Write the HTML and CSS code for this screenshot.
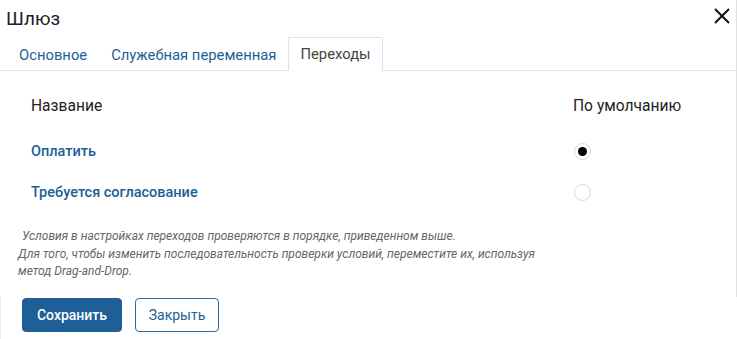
FILE: index.html
```html
<!DOCTYPE html>
<html lang="ru">
<head>
<meta charset="utf-8">
<link rel="stylesheet" href="styles.css">
</head>
<body>
<div class="dialog">
  <div class="main">
    <header class="head">
      <h1 class="title">Шлюз</h1>
      <button class="close" aria-label="Закрыть">
        <svg width="16" height="16" viewBox="0 0 16 16"><path d="M1 1L15 15M15 1L1 15" stroke="#111" stroke-width="2"/></svg>
      </button>
    </header>
    <nav class="tabs">
      <span class="tab">Основное</span>
      <span class="tab">Служебная переменная</span>
      <span class="tab active">Переходы</span>
    </nav>
    <div class="table">
      <div class="row hdr">
        <span class="name">Название</span>
        <span class="def">По умолчанию</span>
      </div>
      <div class="row">
        <span class="name link">Оплатить</span>
        <span class="def"><span class="radio checked"></span></span>
      </div>
      <div class="row">
        <span class="name link">Требуется согласование</span>
        <span class="def"><span class="radio"></span></span>
      </div>
    </div>
    <p class="note"><span class="l1">Условия в настройках переходов проверяются в порядке, приведенном выше.</span><br>Для того, чтобы изменить последовательность проверки условий, переместите их, используя метод Drag-and-Drop.</p>
  </div>
  <footer class="foot">
    <button class="btn primary">Сохранить</button>
    <button class="btn secondary">Закрыть</button>
  </footer>
</div>
</body>
</html>
```

FILE: styles.css
```css
* { box-sizing: border-box; }
html, body { margin: 0; padding: 0; background: #fff; }
body { font-family: Roboto, "Liberation Sans", Arial, sans-serif; color: #222; width: 737px; height: 339px; overflow: hidden; }
.dialog { display: flex; flex-direction: column; height: 339px; }
.main { border-right: 1px solid #e2e2e2; height: 297px; }
.head { display: flex; justify-content: space-between; align-items: center; padding: 4px 7px 0 6px; height: 34px; }
.title { margin: 0; font-size: 19px; font-weight: 400; color: #222; line-height: 24px; }
.close { border: 0; background: none; padding: 0; width: 16px; height: 16px; display: block; margin: -6px -1px 0 0; }
.close svg { display: block; }
.tabs { display: flex; align-items: flex-end; border-bottom: 1px solid #dde2ea; height: 37px; padding-left: 7px; }
.tab { font-size: 14.8px; color: #1d5f96; padding: 0 11px; height: 33px; line-height: 33px; border: 1px solid transparent; border-bottom: 0; margin-bottom: -1px; }
.tab.active { color: #444; background: #fff; border-color: #dde2ea; border-bottom: 1px solid #fff; height: 34px; }
.table { padding: 23px 0 0 31px; }
.row { display: flex; align-items: center; height: 41px; font-size: 14.5px; }
.row.hdr { height: 24px; margin-bottom: 13px; font-size: 15.6px; }
.name { flex: 1; }
.def { width: 163px; }
.link { color: #1d5f96; font-weight: 500; }
.radio { display: block; width: 17px; height: 17px; border: 1px solid #d8d8d8; border-radius: 50%; position: relative; margin-left: 1px; }
.radio.checked::after { content: ""; position: absolute; left: 3px; top: 3px; width: 9px; height: 9px; border-radius: 50%; background: #000; }
.note { margin: 15px 0 0 18px; font-size: 12px; font-style: italic; color: #666; line-height: 17.5px; width: 550px; }
.note .l1 { padding-left: 4px; }
.foot { display: flex; gap: 13px; padding: 1px 0 0 21px; border-left: 1px solid #eee; height: 42px; }
.btn { height: 34px; border-radius: 4px; font-family: inherit; font-size: 14px; padding: 0; }
.btn.primary { width: 100px; background: #1d5f96; color: #fff; border: 1px solid #1d5f96; font-weight: 500; }
.btn.secondary { width: 84px; background: #fff; color: #1d5f96; border: 1px solid #2a6ba3; }
```
